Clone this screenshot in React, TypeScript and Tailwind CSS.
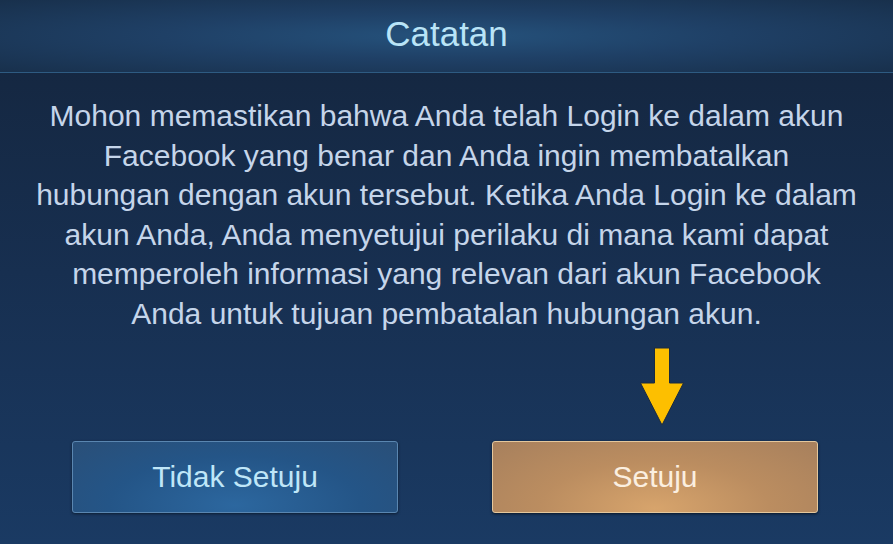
export default function App() {
  return (
    <div
      className="w-[893px] h-[544px] overflow-hidden flex flex-col bg-gradient-to-b from-[#14253d] via-[#172f50] to-[#1a3a63]"
      style={{ fontFamily: '"Liberation Sans", Arial, sans-serif' }}
    >
      {/* Header */}
      <div className="h-[73px] shrink-0 flex items-center justify-center border-b border-[#2e5b82] bg-[radial-gradient(ellipse_at_center,#25527c_0%,#1f4066_45%,#18304c_100%)]">
        <span className="text-[35px] text-[#b9e4f7] leading-none -mt-[6px]">Catatan</span>
      </div>

      {/* Body */}
      <div className="flex-1 flex flex-col">
        <p className="mt-[23px] px-[10px] text-center text-[30px] leading-[39.6px] text-[#c5d5ea] whitespace-nowrap">
          Mohon memastikan bahwa Anda telah Login ke dalam akun
          <br />
          Facebook yang benar dan Anda ingin membatalkan
          <br />
          hubungan dengan akun tersebut. Ketika Anda Login ke dalam
          <br />
          akun Anda, Anda menyetujui perilaku di mana kami dapat
          <br />
          memperoleh informasi yang relevan dari akun Facebook
          <br />
          Anda untuk tujuan pembatalan hubungan akun.
        </p>

        <div className="flex pl-[72px] gap-[94px] mt-[13px]">
          <div className="flex flex-col">
            <div className="h-[94px]" />
            <button className="w-[326px] h-[72px] rounded-[3px] border border-[#5a86b0] bg-[radial-gradient(ellipse_at_50%_90%,#2c679f_0%,#245587_55%,#2a4f78_100%)] shadow-[0_1px_3px_rgba(0,0,0,0.5)] text-[30px] text-[#bfe6f8]">
              Tidak Setuju
            </button>
          </div>
          <div className="flex flex-col">
            <div className="h-[94px] flex justify-center">
              <svg width="46" height="79" viewBox="0 0 46 79" className="ml-[13px]">
                <path
                  d="M15.5 1 H30.5 V36 H44.5 L23 78 L1.5 36 H15.5 Z"
                  fill="#fdbf00"
                  stroke="#1a2a40"
                  strokeWidth="1"
                />
              </svg>
            </div>
            <button className="w-[326px] h-[72px] rounded-[3px] border border-[#e4c79c] bg-[radial-gradient(ellipse_at_50%_95%,#d7a46c_0%,#bb8d60_50%,#a7805d_100%)] shadow-[0_1px_3px_rgba(0,0,0,0.6)] text-[30px] text-[#fbefe0]">
              Setuju
            </button>
          </div>
        </div>
      </div>
    </div>
  );
}
